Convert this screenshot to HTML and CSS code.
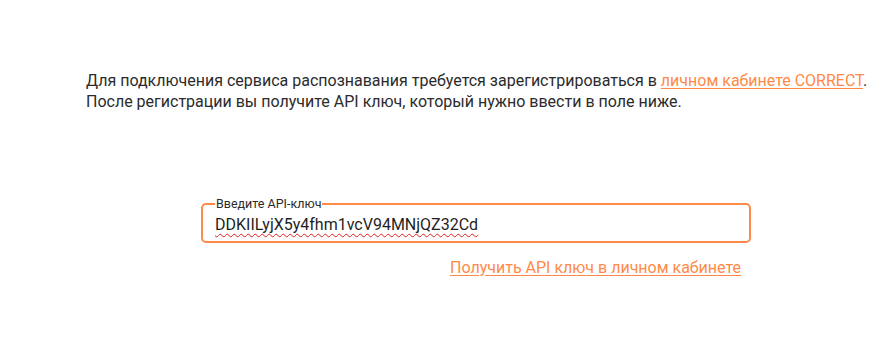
FILE: index.html
```html
<!DOCTYPE html>
<html lang="ru">
<head>
<meta charset="utf-8">
<link rel="stylesheet" href="styles.css">
</head>
<body>
<div class="page">
  <p class="intro">Для подключения сервиса распознавания требуется зарегистрироваться в <a href="#" class="link">личном кабинете CORRECT</a>.<br>После регистрации вы получите API ключ, который нужно ввести в поле ниже.</p>
  <div class="form">
    <fieldset class="field">
      <legend class="field-label">Введите API-ключ</legend>
      <div class="field-value"><span class="misspelled">DDKIILyjX5y4fhm1vcV94MNjQZ32Cd</span></div>
    </fieldset>
    <div class="form-footer">
      <a href="#" class="link link-api">Получить API ключ в личном кабинете</a>
    </div>
  </div>
</div>
</body>
</html>
```
FILE: styles.css
```css
html, body {
  margin: 0;
  padding: 0;
  background: #ffffff;
}
body {
  font-family: Roboto, "Liberation Sans", sans-serif;
  color: #2b2b2b;
}
.page {
  padding: 70px 0 0 86px;
}
.intro {
  margin: 0;
  font-size: 16px;
  line-height: 21px;
}
.link {
  color: #ff8a47;
  text-decoration: underline;
  text-underline-offset: 2px;
}
.form {
  margin: 85px 0 0 115px;
  width: 550px;
}
.field {
  margin: 0;
  padding: 0 12px 7px;
  border: 2px solid #ff8a47;
  border-radius: 5px;
  min-width: 0;
}
.field-label {
  padding: 0 1px;
  font-size: 12.5px;
  line-height: 14px;
  color: #2b2b2b;
}
.field-value {
  padding-top: 4px;
  font-size: 16px;
  line-height: 19px;
  color: #1f1f1f;
}
.misspelled {
  text-decoration: underline wavy #e02020;
  text-decoration-thickness: 1px;
  text-underline-offset: 3px;
}
.form-footer {
  display: flex;
  justify-content: flex-end;
  padding: 15px 10px 0 0;
}
.link-api {
  font-size: 16px;
  line-height: 19px;
}
```
